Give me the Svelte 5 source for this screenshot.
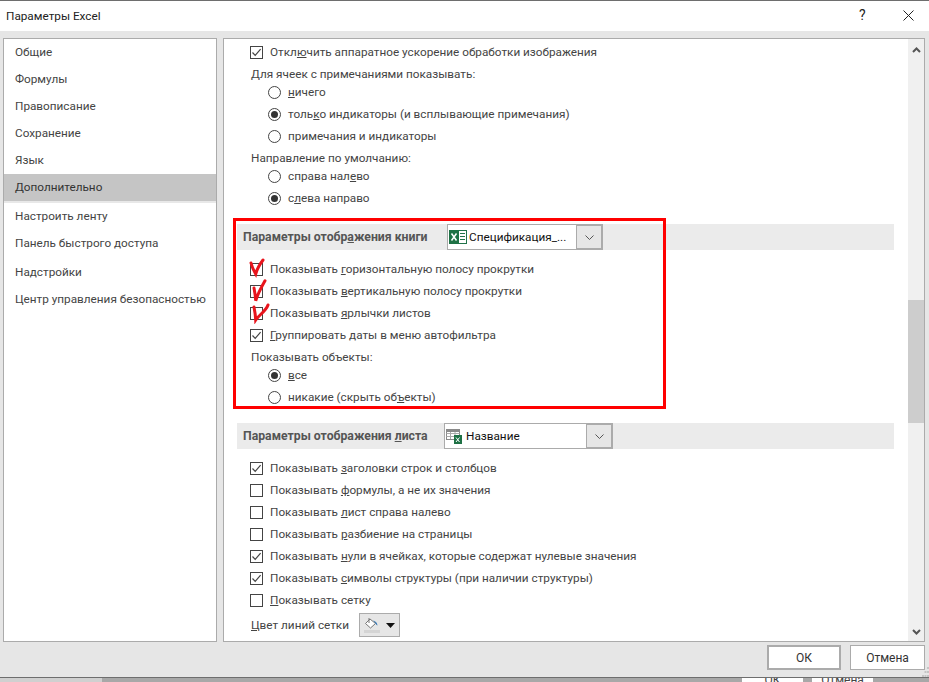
<script>
  const nav = [
    { label: 'Общие' },
    { label: 'Формулы' },
    { label: 'Правописание' },
    { label: 'Сохранение' },
    { label: 'Язык' },
    { label: 'Дополнительно', active: true },
    { label: 'Настроить ленту' },
    { label: 'Панель быстрого доступа' },
    { label: 'Надстройки', sep: true },
    { label: 'Центр управления безопасностью' }
  ]

  // [before underline, underlined letter, after]
  const sheetRows = [
    { on: true, t: ['Показывать ', 'з', 'аголовки строк и столбцов'] },
    { on: false, t: ['Показывать ', 'ф', 'ормулы, а не их значения'] },
    { on: false, t: ['Показывать ', 'л', 'ист справа налево'] },
    { on: false, t: ['Показывать ', 'р', 'азбиение на страницы'] },
    { on: true, t: ['Показывать ', 'н', 'ули в ячейках, которые содержат нулевые значения'] },
    { on: true, t: ['Показывать ', 'с', 'имволы структуры (при наличии структуры)'] },
    { on: false, t: ['', 'П', 'оказывать сетку'] }
  ]
</script>

{#snippet check(on)}
  <svg class="box" width="13" height="13" viewBox="0 0 13 13">
    <rect x="0.5" y="0.5" width="12" height="12" fill="#fff" stroke="#444" />
    {#if on}<path d="M2.5 6.5 5.2 9.3 10.6 3.2" fill="none" stroke="#444" stroke-width="1.2" />{/if}
  </svg>
{/snippet}

{#snippet radio(on)}
  <svg class="dot" width="13" height="13" viewBox="0 0 13 13">
    <circle cx="6.5" cy="6.5" r="6" fill="#fff" stroke="#444" />
    {#if on}<circle cx="6.5" cy="6.5" r="3.5" fill="#333" />{/if}
  </svg>
{/snippet}

{#snippet chevron()}
  <svg width="9" height="5" viewBox="0 0 9 5"><path d="M.5.5l4 4 4-4" fill="none" stroke="#555" /></svg>
{/snippet}

<div class="window">
  <header class="title">
    <span>Параметры Excel</span>
    <span class="help">?</span>
    <svg class="close" width="11" height="11" viewBox="0 0 11 11"><path d="M.5.5l10 10M10.5.5l-10 10" stroke="#222" fill="none" /></svg>
  </header>

  <div class="body">
    <nav class="nav">
      {#each nav as item}
        <div class="nav-item" class:active={item.active} class:sep={item.sep}>{item.label}</div>
      {/each}
    </nav>

    <main class="panel">
      <div class="content">
        <div class="row check-row">{@render check(true)}<span>Откл<u>ю</u>чить аппаратное ускорение обработки изображения</span></div>
        <div class="row label-row">Для ячеек с примечаниями показывать:</div>
        <div class="row radio-row">{@render radio(false)}<span><u>н</u>ичего</span></div>
        <div class="row radio-row">{@render radio(true)}<span>толь<u>к</u>о индикаторы (и всплывающие примечания)</span></div>
        <div class="row radio-row">{@render radio(false)}<span>примечания и индикаторы</span></div>
        <div class="row label-row">Направление по умолчанию:</div>
        <div class="row radio-row">{@render radio(false)}<span>справа нал<u>е</u>во</span></div>
        <div class="row radio-row">{@render radio(true)}<span>с<u>л</u>ева направо</span></div>

        <section class="head">
          <b class="title-book">Параметры отобр<u>а</u>жения книги</b>
          <div class="combo combo-book">
            <svg width="18" height="16" viewBox="0 0 18 16">
              <rect x="6.5" y="1.5" width="11" height="13" fill="#fff" stroke="#21734a" />
              <path d="M11 4.500h5M11 7.500h5M11 10.500h5" stroke="#21734a" />
              <rect x="0" y="1" width="10" height="14" fill="#1e7145" />
              <path d="M2.500 4.500l5 7M7.500 4.500l-5 7" stroke="#fff" stroke-width="1.500" />
            </svg>
            <span>Спецификация_...</span>
            <i class="combo-btn">{@render chevron()}</i>
          </div>
        </section>

        <div class="row check-row first">{@render check(false)}<span>Показывать <u>г</u>оризонтальную полосу прокрутки</span></div>
        <div class="row check-row">{@render check(false)}<span>Показывать <u>в</u>ертикальную полосу прокрутки</span></div>
        <div class="row check-row">{@render check(false)}<span>Показывать <u>я</u>рлычки листов</span></div>
        <div class="row check-row">{@render check(true)}<span><u>Г</u>руппировать даты в меню автофильтра</span></div>
        <div class="row label-row">Показывать объекты:</div>
        <div class="row radio-row">{@render radio(true)}<span><u>в</u>се</span></div>
        <div class="row radio-row">{@render radio(false)}<span>никакие (скрыть об<u>ъ</u>екты)</span></div>

        <section class="head">
          <b class="title-sheet">Параметры отображения <u>л</u>иста</b>
          <div class="combo combo-sheet">
            <svg width="17" height="16" viewBox="0 0 17 16">
              <rect x="0.5" y="1.5" width="13" height="10" fill="#fff" stroke="#888" />
              <path d="M.5 5.500h13M.5 8.500h13M4.500 2v9M9 2v9" stroke="#aaa" />
              <rect x="0" y="1" width="14" height="3" fill="#8a8a8a" />
              <rect x="8" y="7" width="8" height="9" fill="#1e7145" />
              <path d="M10 9.500l3.500 4.500M13.500 9.500l-3.500 4.500" stroke="#fff" />
            </svg>
            <span>Название</span>
            <i class="combo-btn">{@render chevron()}</i>
          </div>
        </section>

        {#each sheetRows as r, i}
          <div class="row check-row" class:first={i === 0}>{@render check(r.on)}<span>{r.t[0]}<u>{r.t[1]}</u>{r.t[2]}</span></div>
        {/each}
        <div class="row grid-color">
          <span class="grid-label"><u>Ц</u>вет линий сетки</span>
          <div class="color-btn">
            <svg width="16" height="16" viewBox="0 0 16 16">
              <path d="M6 2 1.500 6.500 6.500 11 11.500 6.500z" fill="#fff" stroke="#777" />
              <path d="M5 1v5" stroke="#777" />
              <path d="M9 3.500c2 .5 4 1.500 4.500 5-1.200-.5-2-2-2.500-3z" fill="#2f75b5" />
              <rect x="0" y="13" width="16" height="3" fill="#d4d4d4" />
            </svg>
            <svg width="9" height="5" viewBox="0 0 9 5"><path d="M0 0h9L4.500 5z" fill="#111" /></svg>
          </div>
        </div>
      </div>

      <aside class="scrollbar">
        <svg width="9" height="6" viewBox="0 0 9 6"><path d="M1 5l3.500-3.500L8 5" fill="none" stroke="#555" stroke-width="2" /></svg>
        <div class="track"><div class="thumb"></div></div>
        <svg width="9" height="6" viewBox="0 0 9 6"><path d="M1 1l3.500 3.500L8 1" fill="none" stroke="#555" stroke-width="2" /></svg>
      </aside>

      <div class="annotation"></div>
      <svg class="marks" width="24" height="68" viewBox="0 0 24 68">
        <path d="M4 7c1 4 3 8 4.700 11C10 13 13 8 16 4" />
        <path d="M7 32c1 5 1.500 9 1.700 12.700C11 37 15 30 18 24.700" />
        <path d="M7 51c1 5 1.500 9 1.700 13C12 59 19 55 21 49" />
      </svg>
    </main>
  </div>

  <footer class="actions">
    <button class="primary">ОК</button>
    <button>Отмена</button>
    <svg class="grip" width="7" height="10" viewBox="0 0 7 10">
      <path d="M5 0h2v2H5zM2.500 4h2v2h-2zM5 4h2v2H5zM0 8h2v2H0zM2.500 8h2v2h-2zM5 8h2v2H5z" fill="#c4c4c4" />
    </svg>
  </footer>
</div>

<div class="behind">
  <span class="peek">ОК</span>
  <span class="peek">Отмена</span>
</div>

<style>
  :global(body) {
    background: #e6e6e6;
    overflow: hidden;
  }
  .window {
    height: 678px;
    box-sizing: border-box;
    border-top: 1px solid #6e6e6e;
    border-bottom: 1px solid #6e6e6e;
    background: #e6e6e6;
    display: flex;
    flex-direction: column;
    font: 11.750px Roboto, sans-serif;
    color: #444;
  }
  .title {
    height: 30px;
    flex: none;
    background: #fff;
    display: flex;
    align-items: center;
    padding-left: 6px;
    color: #222;
    position: relative;
  }
  .help {
    position: absolute;
    left: 859px;
    top: 6px;
    font-size: 14px;
  }
  .close {
    position: absolute;
    left: 903px;
    top: 9px;
  }
  .body {
    flex: none;
    height: 604px;
    margin-top: 7px;
    padding: 0 4px 0 3px;
    display: flex;
    gap: 6px;
  }
  .nav {
    width: 214px;
    flex: none;
    box-sizing: border-box;
    border: 1px solid #ababab;
    background: #fff;
  }
  .nav-item {
    height: 27px;
    line-height: 27px;
    padding-left: 11px;
    color: #444;
  }
  .nav-item.active {
    background: #c5c5c5;
    color: #333;
    border-bottom: 2px solid #e8e8e8;
  }
  .nav-item.sep {
    margin-top: 2px;
  }
  .panel {
    flex: 1;
    box-sizing: border-box;
    border: 1px solid #ababab;
    background: #fff;
    display: flex;
    position: relative;
    overflow: hidden;
  }
  .content {
    flex: 1;
    padding-top: 2px;
    min-width: 0;
  }
  .row {
    display: flex;
    align-items: center;
    height: 22px;
    white-space: nowrap;
  }
  .check-row {
    padding-left: 26px;
    gap: 7px;
  }
  .check-row.first {
    margin-top: 8px;
  }
  .label-row {
    box-sizing: border-box;
    padding: 3px 0 0 27px;
    height: 18px;
  }
  .radio-row {
    padding-left: 44px;
    gap: 7px;
  }
  .box,
  .dot {
    flex: none;
  }
  .head {
    height: 26px;
    margin: 15px 14px 0 13px;
    background: #ebebeb;
    display: flex;
    align-items: center;
    padding-left: 6px;
    color: #555;
  }
  .head b {
    flex: none;
    font-weight: 700;
    font-size: 12.250px;
  }
  .title-book {
    width: 204px;
  }
  .title-sheet {
    width: 201px;
  }
  .combo {
    height: 26px;
    box-sizing: border-box;
    border: 1px solid #ababab;
    background: #fff;
    display: flex;
    align-items: center;
    gap: 3px;
    color: #111;
    padding-left: 1px;
    position: relative;
  }
  .combo-book {
    width: 156px;
    gap: 2px;
  }
  .combo-sheet {
    width: 169px;
  }
  .combo-btn {
    position: absolute;
    right: -1px;
    top: -1px;
    bottom: -1px;
    width: 27px;
    background: #e6e6e6;
    border: 2px solid #ababab;
    border-left-width: 1px;
    box-sizing: border-box;
    display: flex;
    align-items: center;
    justify-content: center;
  }
  .grid-color {
    padding-left: 27px;
    height: 28px;
  }
  .grid-label {
    width: 108px;
  }
  .color-btn {
    width: 41px;
    height: 24px;
    box-sizing: border-box;
    border: 1px solid #ababab;
    background: #e6e6e6;
    display: flex;
    align-items: center;
    justify-content: center;
    gap: 6px;
  }
  .scrollbar {
    width: 16px;
    flex: none;
    background: #f0f0f0;
    display: flex;
    flex-direction: column;
    align-items: center;
    padding: 8px 0 6px;
    box-sizing: border-box;
  }
  .track {
    flex: 1;
    width: 100%;
    padding-top: 247px;
  }
  .thumb {
    height: 123px;
    background: #cdcdcd;
  }
  .annotation {
    position: absolute;
    left: 9px;
    top: 179px;
    width: 433px;
    height: 191px;
    box-sizing: border-box;
    border: 3px solid #f00;
    pointer-events: none;
  }
  .marks {
    position: absolute;
    left: 23px;
    top: 217px;
  }
  .marks path {
    fill: none;
    stroke: #e8141c;
    stroke-width: 3;
    stroke-linecap: round;
  }
  .actions {
    flex: 1;
    display: flex;
    justify-content: flex-end;
    gap: 9px;
    padding: 3px 4px 0 0;
    position: relative;
  }
  .grip {
    position: absolute;
    right: 0;
    bottom: 0;
  }
  button {
    height: 25px;
    width: 75px;
    box-sizing: border-box;
    border: 1px solid #ababab;
    background: #fff;
    font: 12px Roboto, sans-serif;
    color: #333;
    padding: 0;
  }
  button.primary {
    width: 74px;
    border: 2px solid #ababab;
  }
  .behind {
    height: 4px;
    background: linear-gradient(to right, #d0d0d0 102px, #a8a8a8 102px);
    display: flex;
    justify-content: flex-end;
    overflow: hidden;
    font: 12px Roboto, sans-serif;
    color: #444;
    padding-right: 56px;
    gap: 9px;
  }
  .peek {
    width: 61px;
    height: 14px;
    background: #fff;
    text-align: center;
    line-height: 14px;
    margin-top: -5px;
  }
</style>
